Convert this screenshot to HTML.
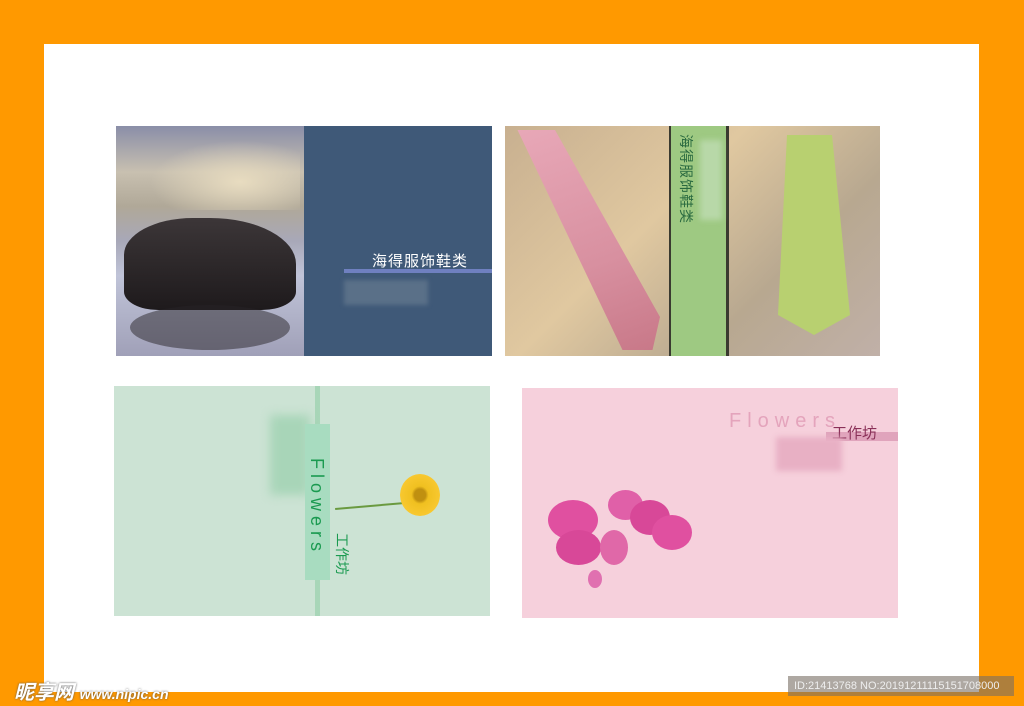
<!DOCTYPE html>
<html><head><meta charset="utf-8"><style>
body{margin:0;width:1024px;height:706px;background:#ff9900;position:relative;overflow:hidden;font-family:"Liberation Sans","Noto Sans CJK SC",sans-serif}
div{position:absolute;box-sizing:border-box}
.r{transform-origin:0 0;transform:rotate(90deg);white-space:nowrap}
</style></head><body>
<div style="left:44px;top:44px;width:935px;height:648px;background:#fff"></div>

<!-- card1 -->
<div style="left:116px;top:126px;width:188px;height:230px;background:linear-gradient(#8a8ea8 0%,#c8c0b0 20%,#b0a898 35%,#a8a8b8 50%,#c0c4d8 65%,#a0a0b8 100%)"></div>
<div style="left:150px;top:140px;width:150px;height:70px;background:radial-gradient(ellipse at 60% 60%,#e8dcc0,rgba(220,210,180,0) 70%)"></div>
<div style="left:124px;top:218px;width:172px;height:92px;border-radius:40% 50% 20% 20%;background:linear-gradient(#3c3638,#1e1a1c)"></div>
<div style="left:130px;top:305px;width:160px;height:45px;border-radius:50%;background:rgba(40,36,40,.5)"></div>
<div style="left:304px;top:126px;width:188px;height:230px;background:#3f5978"></div>
<div style="left:372px;top:250px;color:#fff;font-size:15px;letter-spacing:1px;white-space:nowrap">海得服饰鞋类</div>
<div style="left:344px;top:269px;width:148px;height:4px;background:#6f80c0"></div>
<div style="left:344px;top:280px;width:84px;height:25px;background:#5a7088;filter:blur(2px)"></div>

<!-- card2 -->
<div style="left:505px;top:126px;width:375px;height:230px;background:linear-gradient(135deg,#c8b090,#e0c8a0 40%,#b8a890 70%,#c0b0a8)"></div>
<div style="left:510px;top:130px;width:150px;height:220px;background:linear-gradient(160deg,#e8a8b8,#d890a0 60%,#c87888);clip-path:polygon(5% 0,30% 0,100% 85%,95% 100%,75% 100%)"></div>
<div style="left:760px;top:135px;width:90px;height:200px;background:#b8d070;clip-path:polygon(30% 0,80% 0,100% 90%,60% 100%,20% 90%)"></div>
<div style="left:669px;top:126px;width:60px;height:230px;background:#3a3a30"></div>
<div style="left:671px;top:126px;width:55px;height:230px;background:#9ec982"></div>
<div class="r" style="left:696px;top:134px;color:#2a6a40;font-size:14px;letter-spacing:1px">海得服饰鞋类</div>
<div style="left:700px;top:140px;width:22px;height:80px;background:#b8d8a8;filter:blur(3px)"></div>

<!-- card3 -->
<div style="left:114px;top:386px;width:376px;height:230px;background:#cce3d4"></div>
<div style="left:315px;top:386px;width:5px;height:230px;background:#a8d6b8"></div>
<div style="left:270px;top:415px;width:40px;height:80px;background:#a8d5b8;filter:blur(5px)"></div>
<div style="left:305px;top:424px;width:25px;height:156px;background:#a8dcc0"></div>
<div class="r" style="left:327px;top:458px;color:#1a9a50;font-size:18px;letter-spacing:5px">Flowers</div>
<div class="r" style="left:352px;top:533px;color:#1a9a50;font-size:14px">工作坊</div>
<div style="left:335px;top:505px;width:70px;height:2px;background:#6a9a40;transform:rotate(-5deg)"></div>
<div style="left:400px;top:474px;width:40px;height:42px;border-radius:50%;background:radial-gradient(#c09010 20%,#f0c020 30%,#f8c830 70%,rgba(248,200,48,0) 72%)"></div>

<!-- card4 -->
<div style="left:522px;top:388px;width:376px;height:230px;background:#f6d0dc"></div>
<div style="left:729px;top:410px;color:#e4a4bc;font-size:20px;letter-spacing:6px">Flowers</div>
<div style="left:826px;top:432px;width:72px;height:9px;background:#e0a4bc"></div>
<div style="left:832px;top:422px;color:#8a3058;font-size:15px;white-space:nowrap">工作坊</div>
<div style="left:776px;top:437px;width:66px;height:34px;background:#e8b0c4;filter:blur(3px)"></div>
<div style="left:548px;top:500px;width:50px;height:40px;border-radius:50%;background:#e050a0"></div>
<div style="left:556px;top:530px;width:45px;height:35px;border-radius:50%;background:#d84898"></div>
<div style="left:608px;top:490px;width:35px;height:30px;border-radius:50%;background:#e060a8"></div>
<div style="left:630px;top:500px;width:40px;height:35px;border-radius:50%;background:#d84898"></div>
<div style="left:652px;top:515px;width:40px;height:35px;border-radius:50%;background:#e050a0"></div>
<div style="left:600px;top:530px;width:28px;height:35px;border-radius:50%;background:#e068a8"></div>
<div style="left:588px;top:570px;width:14px;height:18px;border-radius:50%;background:#e070b0"></div>

<!-- watermarks -->
<div style="left:14px;top:676px;color:#fff;font-size:20px;font-weight:bold;font-style:italic;text-shadow:0 0 2px #555;white-space:nowrap">昵享网 <span style="font-size:14px">www.nipic.cn</span></div>
<div style="left:788px;top:676px;width:226px;height:20px;background:rgba(120,110,100,.6);color:#eee;font-size:11px;line-height:20px;padding-left:6px;white-space:nowrap">ID:21413768 NO:20191211115151708000</div>
</body></html>
